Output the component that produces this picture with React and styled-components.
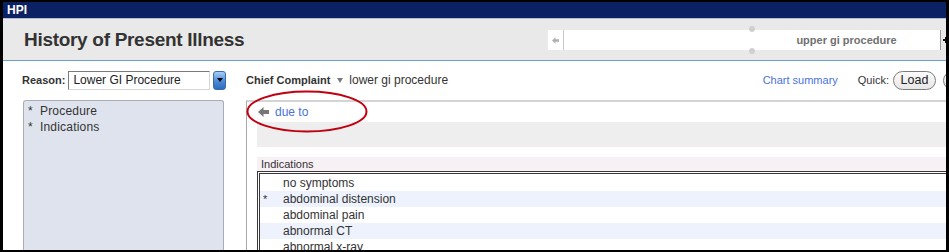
import React from "react";
import styled, { createGlobalStyle } from "styled-components";

const GlobalStyle = createGlobalStyle`
  html, body { margin: 0; padding: 0; background: #ffffff; }
  body { font-family: "Liberation Sans", Arial, sans-serif; }
  * { box-sizing: border-box; }
`;

const Frame = styled.div`
  width: 949px;
  height: 252px;
  border-style: solid;
  border-color: #000;
  border-width: 2px 3px 2px 3px;
  background: #fff;
  overflow: hidden;
  display: flex;
  flex-direction: column;
  position: relative;
`;

const TitleBar = styled.div`
  height: 17px;
  flex: 0 0 auto;
  background: #0a2264;
  border-bottom: 1px solid #b9bfd2;
  color: #fff;
  font-weight: bold;
  font-size: 12px;
  line-height: 16px;
  padding-left: 4px;
`;

const Header = styled.div`
  height: 42px;
  flex: 0 0 auto;
  background: #e9e9e9;
  border-bottom: 1px solid #6aa0d8;
  display: flex;
  align-items: center;
  padding-left: 21px;
  overflow: hidden;
`;

const PageTitle = styled.h1`
  margin: 0;
  flex: 0 0 524px;
  font-size: 19px;
  letter-spacing: -0.3px;
  font-weight: bold;
  color: #333;
`;

const SearchBox = styled.div`
  flex: 0 0 auto;
  width: 392px;
  height: 20px;
  margin-top: 1px;
  background: #fff;
  display: flex;
  align-items: stretch;
`;

const ArrowCell = styled.div`
  width: 16px;
  border-right: 1px solid #c8c8c8;
  display: flex;
  align-items: center;
  justify-content: center;
`;

const Segment = styled.div`
  flex: 1;
  display: flex;
  align-items: center;
  justify-content: center;
  font-size: 11px;
  font-weight: bold;
  color: #707070;
`;

const Notch = styled.div`
  width: 2px;
  position: relative;
  &::before, &::after {
    content: "";
    position: absolute;
    left: -2px;
    width: 6px;
    height: 6px;
    border-radius: 50%;
    background: #cfcfcf;
  }
  &::before { top: -4px; }
  &::after { bottom: -4px; }
`;

const PlusCell = styled.div`
  flex: 0 0 auto;
  width: 6px;
  height: 20px;
  margin-top: 1px;
  border-left: 1px solid #9a9a9a;
  position: relative;
  &::before {
    content: "";
    position: absolute;
    left: 2px;
    top: 9px;
    width: 6px;
    height: 2px;
    background: #111;
  }
  &::after {
    content: "";
    position: absolute;
    left: 4px;
    top: 7px;
    width: 2px;
    height: 6px;
    background: #111;
  }
`;

const Body = styled.div`
  flex: 1;
  display: grid;
  grid-template-columns: 243px 1fr;
  padding-top: 9px;
  min-height: 0;
`;

const LeftCol = styled.div`
  padding-left: 19px;
  display: flex;
  flex-direction: column;
  min-height: 0;
`;

const Row = styled.div`
  height: 20px;
  display: flex;
  align-items: center;
  flex: 0 0 auto;
`;

const Label = styled.span`
  font-size: 11px;
  font-weight: bold;
  color: #333;
`;

const SelectField = styled.div`
  margin-left: 3px;
  width: 142px;
  height: 19px;
  border: 1px solid #7a7a7a;
  border-right-color: #d6d6d6;
  border-bottom-color: #d6d6d6;
  background: #fff;
  font-size: 12px;
  color: #222;
  line-height: 17px;
  padding-left: 4px;
  white-space: nowrap;
`;

const DropButton = styled.div`
  margin-left: 3px;
  width: 13px;
  height: 19px;
  border: 1px solid #3b6aa8;
  border-radius: 3px;
  background: linear-gradient(#a9cdf6, #4b88d6 55%, #2e6cc0);
  display: flex;
  align-items: center;
  justify-content: center;
  &::after {
    content: "";
    border-left: 3px solid transparent;
    border-right: 3px solid transparent;
    border-top: 4px solid #000;
  }
`;

const LeftPanel = styled.div`
  margin-top: 10px;
  margin-left: 1px;
  width: 201px;
  flex: 1;
  background: #dfe3ee;
  border: 1px solid #a9adb8;
  border-bottom: none;
  border-radius: 3px 3px 0 0;
  padding: 2px 0 0 4px;
`;

const NavItem = styled.div`
  font-size: 12px;
  line-height: 16px;
  color: #333;
  letter-spacing: 0.2px;
  white-space: pre;
`;

const RightCol = styled.div`
  position: relative;
  display: flex;
  flex-direction: column;
  min-height: 0;
  min-width: 0;
`;

const ChiefGroup = styled.div`
  flex: 1;
  display: flex;
  align-items: center;
  min-width: 0;
`;

const DownTri = styled.span`
  margin: 1px 6px 0 7px;
  border-left: 3px solid transparent;
  border-right: 3px solid transparent;
  border-top: 5px solid #7a7a7a;
`;

const Value = styled.span`
  font-size: 12px;
  color: #333;
`;

const LinkText = styled.span`
  font-size: ${(p) => p.$size || 11}px;
  color: #4a72dc;
  white-space: nowrap;
`;

const Quick = styled.span`
  margin-left: 20px;
  font-size: 11px;
  color: #333;
`;

const PillButton = styled.div`
  flex: 0 0 auto;
  margin-left: ${(p) => p.$ml}px;
  margin-right: ${(p) => p.$mr || 0}px;
  width: ${(p) => p.$w}px;
  height: 19px;
  border: 1px solid #7d7d7d;
  border-radius: 10px;
  background: linear-gradient(#fbfbfb, #e6e6e6);
  font-size: 12.5px;
  color: #222;
  display: flex;
  align-items: center;
  justify-content: center;
`;

const ContentPanel = styled.div`
  margin-top: 10px;
  flex: 1;
  border-top: 2px solid #d4d4d4;
  border-left: 1px solid #a8a8a8;
  display: flex;
  flex-direction: column;
  min-height: 0;
`;

const BackRow = styled.div`
  height: 20px;
  display: flex;
  align-items: center;
  padding-left: 11px;
  gap: 6px;
  flex: 0 0 auto;
`;

const GreyBand = styled.div`
  margin-left: 10px;
  height: 25px;
  background: #eeeeee;
  flex: 0 0 auto;
`;

const SectionHeader = styled.div`
  margin: 10px 0 0 10px;
  height: 14px;
  background: #f7f1f5;
  font-size: 11px;
  line-height: 14px;
  color: #333;
  padding-left: 4px;
  flex: 0 0 auto;
`;

const ListBox = styled.div`
  margin-left: 10px;
  border-top: 3px double #3a3a3a;
  border-left: 3px double #3a3a3a;
  padding-top: 1px;
  flex: 1;
`;

const ListRow = styled.div`
  height: 16px;
  display: flex;
  align-items: center;
  background: ${(p) => (p.$alt ? "#edf2fd" : "#ffffff")};
  font-size: 12px;
  color: #333;
  white-space: nowrap;
`;

const Star = styled.span`
  width: 23px;
  padding-left: 3px;
  font-size: 11px;
  color: #333;
`;

const Annotation = styled.svg`
  position: absolute;
  left: 0;
  top: 20px;
  pointer-events: none;
`;

const BackArrow = ({ w = 11, h = 10, color = "#777" }) => (
  <svg width={w} height={h} viewBox="0 0 11 10">
    <path d="M0 5 L5.5 0 L5.5 3 L11 3 L11 7 L5.5 7 L5.5 10 Z" fill={color} />
  </svg>
);

const rows = [
  { text: "no symptoms" },
  { text: "abdominal distension", star: true, alt: true },
  { text: "abdominal pain" },
  { text: "abnormal CT", alt: true },
  { text: "abnormal x-ray" },
];

export default function App() {
  return (
    <>
      <GlobalStyle />
      <Frame>
        <TitleBar>HPI</TitleBar>
        <Header>
          <PageTitle>History of Present Illness</PageTitle>
          <SearchBox>
            <ArrowCell>
              <BackArrow w={7} h={7} color="#b0b0b0" />
            </ArrowCell>
            <Segment />
            <Notch />
            <Segment>upper gi procedure</Segment>
          </SearchBox>
          <PlusCell />
        </Header>
        <Body>
          <LeftCol>
            <Row>
              <Label>Reason:</Label>
              <SelectField>Lower GI Procedure</SelectField>
              <DropButton />
            </Row>
            <LeftPanel>
              <NavItem>{"*  Procedure"}</NavItem>
              <NavItem>{"*  Indications"}</NavItem>
            </LeftPanel>
          </LeftCol>
          <RightCol>
            <Row>
              <ChiefGroup>
                <Label>Chief Complaint</Label>
                <DownTri />
                <Value>lower gi procedure</Value>
              </ChiefGroup>
              <LinkText>Chart summary</LinkText>
              <Quick>Quick:</Quick>
              <PillButton $ml={4} $w={43}>Load</PillButton>
              <PillButton $ml={7} $w={40} $mr={-37} />
            </Row>
            <ContentPanel>
              <BackRow>
                <BackArrow />
                <LinkText $size={12}>due to</LinkText>
              </BackRow>
              <GreyBand />
              <SectionHeader>Indications</SectionHeader>
              <ListBox>
                {rows.map((r) => (
                  <ListRow key={r.text} $alt={r.alt}>
                    <Star>{r.star ? "*" : ""}</Star>
                    {r.text}
                  </ListRow>
                ))}
              </ListBox>
            </ContentPanel>
            <Annotation width="124" height="45" viewBox="0 0 124 45">
              <ellipse cx="61" cy="21.5" rx="59.5" ry="20" fill="none" stroke="#c00010" strokeWidth="2" />
            </Annotation>
          </RightCol>
        </Body>
      </Frame>
    </>
  );
}
